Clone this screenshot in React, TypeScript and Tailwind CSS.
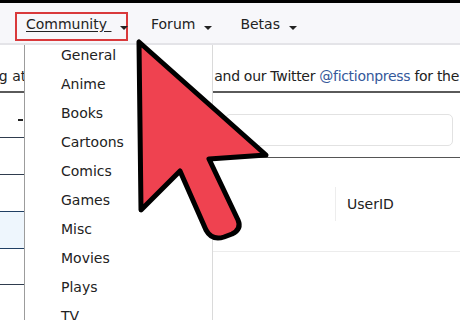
const categories = ["General", "Anime", "Books", "Cartoons", "Comics", "Games", "Misc", "Movies", "Plays", "TV"];

function Caret() {
    return <span className="inline-block ml-[9px] mt-[10px] w-0 h-0 border-l-[4px] border-r-[4px] border-t-[4px] border-l-transparent border-r-transparent border-t-[#222]" />;
}

function Cursor() {
    return (
        <svg className="absolute left-0 top-0 z-30 pointer-events-none" width="460" height="320" viewBox="0 0 460 320">
            <path
                d="M139,42 L141,210 L180,171 L206,230 Q212,241 224,237 L232,234 Q242,229 238,220 L209,159 L266,155 Z"
                fill="#ef4250"
                stroke="#000"
                strokeWidth="5"
                strokeLinejoin="round"
            />
        </svg>
    );
}

export default function App() {
    return (
        <div className="relative w-[460px] h-[320px] overflow-hidden bg-white text-[#222] text-[14px] leading-[16px]" style={{fontFamily: "'DejaVu Sans', Verdana, sans-serif"}}>
            <div className="h-[3px] bg-black" />

            {/* nav */}
            <nav className="relative z-20 h-[42px] bg-[#f7f7fa] border-b-2 border-[#e4e4e8] flex items-start pt-[9px] pl-[15px]">
                <div className="flex items-start h-[29px] w-[113px] border-2 border-[#d9393b] pt-[2px] pl-[9px]">
                    <span className="underline underline-offset-[2px] whitespace-pre">Community </span>
                    <Caret />
                </div>
                <div className="flex items-start pt-[4px] ml-[23px]">
                    <span>Forum</span>
                    <Caret />
                </div>
                <div className="flex items-start pt-[4px] ml-[28px]">
                    <span>Betas</span>
                    <Caret />
                </div>
            </nav>

            {/* announcement */}
            <div className="h-[48px] border-b-[2px] border-[#5a5a5a] pt-[23px] flex whitespace-nowrap">
                <span className="-ml-[10px]">ng at</span>
                <span className="ml-[188px] tracking-[-0.3px]">and our Twitter <span className="text-[#35589a]">@fictionpress</span> for the latest</span>
            </div>

            <div className="flex">
                {/* left list */}
                <div className="w-[213px] shrink-0">
                    <div className="h-[45px] border-b border-[#2f3c4e] relative">
                        <span className="absolute left-[18px] top-[26px] w-[5px] h-[2px] bg-[#222]" />
                    </div>
                    <div className="h-[37px] border-b border-[#2f3c4e]" />
                    <div className="h-[37px] border-b border-[#1f3f63]" />
                    <div className="h-[37px] border-b border-[#1f3f63] bg-[#eef6fd]" />
                    <div className="h-[36px] border-b border-[#2f3c4e]" />
                </div>

                {/* right panel */}
                <div className="flex-1 pt-[21px]">
                    <div className="h-[32px] ml-[12px] mr-[7px] rounded-[5px] border border-[#e2e2e2]" />
                    <div className="mt-[11px] border-b border-[#555]" />
                    <div className="h-[94px] border-b border-[#ececec] pt-[29px]">
                        <div className="flex h-[34px]">
                            <div className="w-[122px]" />
                            <div className="flex-1 border-l border-[#ededed] pl-[11px] pt-[9px]">UserID</div>
                        </div>
                    </div>
                </div>
            </div>

            {/* dropdown */}
            <div className="absolute z-10 left-[24px] top-[34px] w-[189px] h-[300px] bg-white border border-[#dadada] border-l-[#9c9c9c] rounded-tr-[5px] pt-[6px] pl-[36px]">
                {categories.map((c) => (
                    <div key={c} className="h-[29px] pt-[6px]">{c}</div>
                ))}
            </div>

            <Cursor />
        </div>
    );
}
